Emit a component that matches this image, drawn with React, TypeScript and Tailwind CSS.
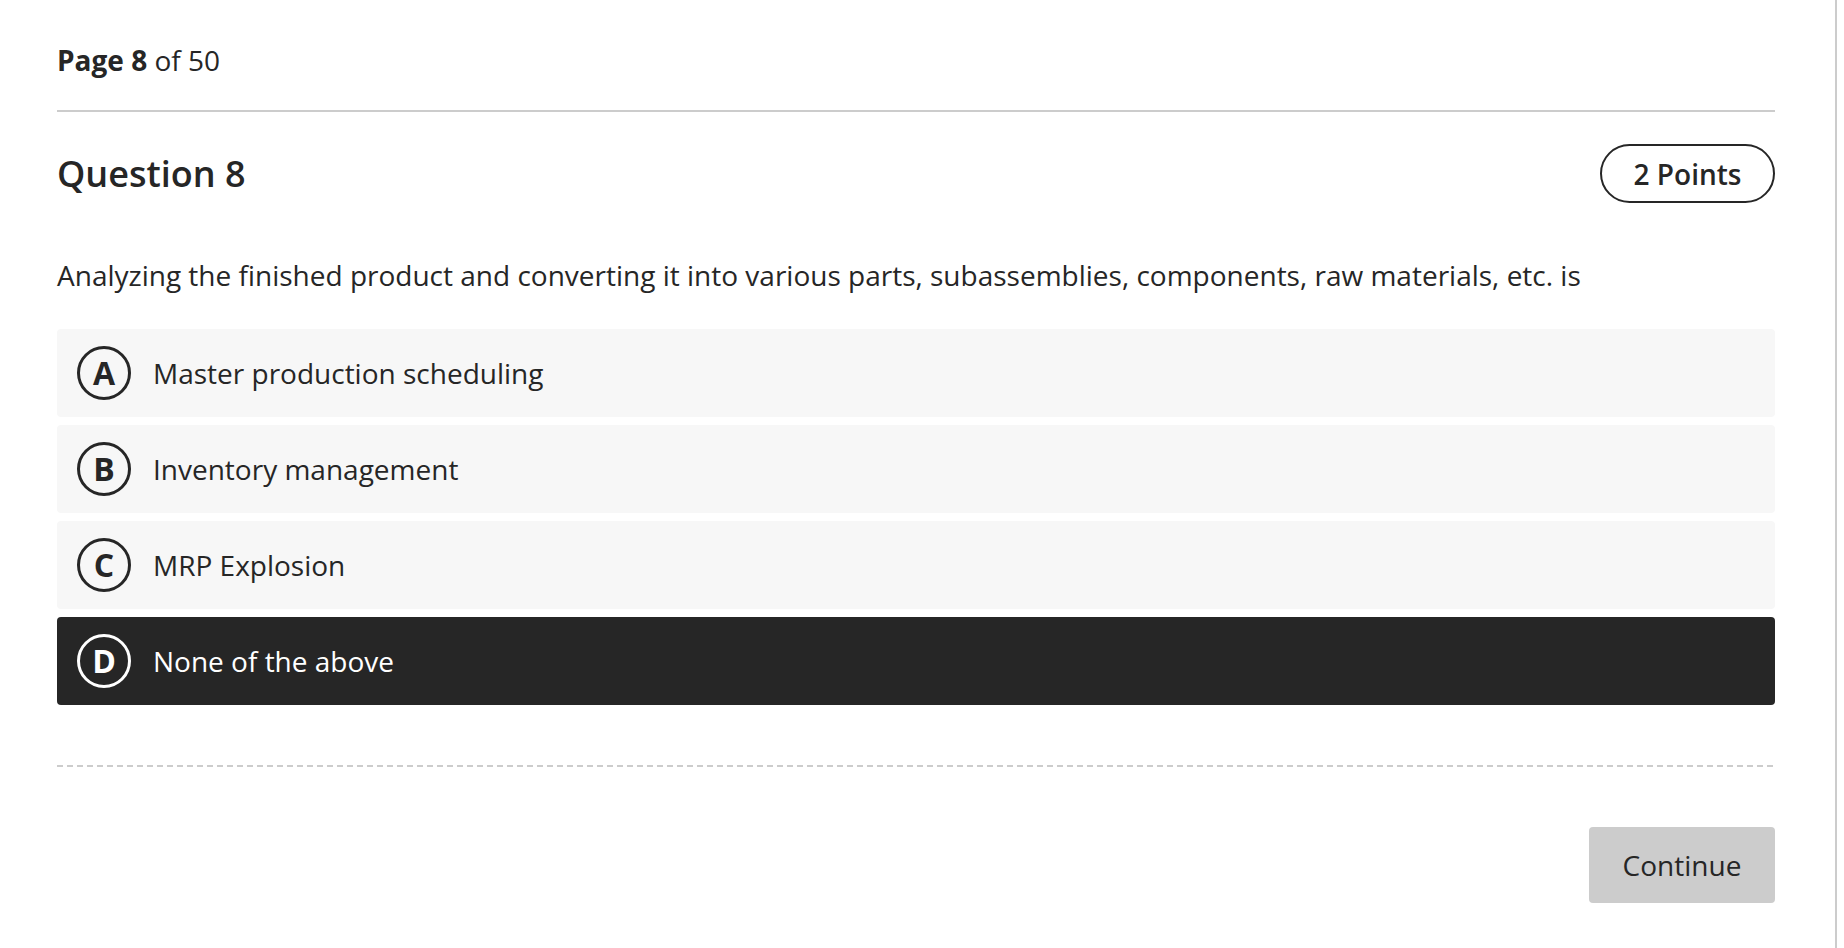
const options = [
  { letter: 'A', text: 'Master production scheduling' },
  { letter: 'B', text: 'Inventory management' },
  { letter: 'C', text: 'MRP Explosion' },
  { letter: 'D', text: 'None of the above' },
]

const selected = 'D'

export default function App() {
  return (
    <div className="min-h-screen w-[1837px] border-r-2 border-[#cccccc] bg-white pl-[57px] pr-[60px] font-['Open_Sans',sans-serif] text-[#262626]">
      {/* Pager */}
      <div className="pt-[40px] text-[28px] leading-[40px]">
        <span className="font-bold">Page 8</span> of 50
      </div>
      <div className="mt-[30px] h-[2px] bg-[#cccccc]" />

      {/* Question header */}
      <div className="mt-[32px] flex items-center justify-between">
        <h1 className="text-[36px] font-semibold leading-[48px]">Question 8</h1>
        <div className="flex h-[59px] w-[175px] items-center justify-center rounded-full border-2 border-[#262626] text-[28px] font-semibold">
          2 Points
        </div>
      </div>

      <p className="mt-[52px] text-[28px] leading-[40px]">
        Analyzing the finished product and converting it into various parts, subassemblies, components, raw materials, etc. is
      </p>

      {/* Answers */}
      <div className="mt-[34px] flex flex-col gap-[8px]">
        {options.map((o) => {
          const active = o.letter === selected
          return (
            <div
              key={o.letter}
              className={
                active
                  ? 'flex h-[88px] items-center gap-[22px] rounded-[4px] bg-[#262626] px-[20px] text-white'
                  : 'flex h-[88px] items-center gap-[22px] rounded-[4px] bg-[#f7f7f7] px-[20px]'
              }
            >
              <span
                className={
                  active
                    ? 'flex h-[54px] w-[54px] items-center justify-center rounded-full border-[3px] border-white text-[32px] font-bold leading-none'
                    : 'flex h-[54px] w-[54px] items-center justify-center rounded-full border-[3px] border-[#262626] text-[32px] font-bold leading-none'
                }
              >
                {o.letter}
              </span>
              <span className="text-[28px] leading-[40px]">{o.text}</span>
            </div>
          )
        })}
      </div>

      <div className="mt-[60px] h-[2px] bg-[repeating-linear-gradient(to_right,#cccccc_0_6px,transparent_6px_10px)]" />

      <div className="mt-[60px] flex justify-end">
        <button className="h-[76px] w-[186px] rounded-[4px] bg-[#cccccc] text-[28px] text-[#262626]">
          Continue
        </button>
      </div>
    </div>
  )
}
